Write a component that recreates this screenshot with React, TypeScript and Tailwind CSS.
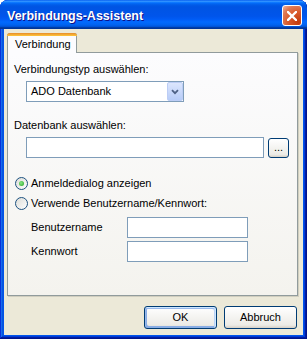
const font = "font-['Liberation_Sans',Arial,sans-serif]";

function Radio({ checked }: { checked?: boolean }) {
  return (
    <span className="flex h-[13px] w-[13px] shrink-0 items-center justify-center rounded-full border border-[#1c5180] bg-[linear-gradient(135deg,#dcdcd7,#ffffff)]">
      {checked && (
        <span className="h-[5px] w-[5px] rounded-full bg-[radial-gradient(circle_at_40%_40%,#8ae886,#21a121)]" />
      )}
    </span>
  );
}

const btn =
  'rounded-[3px] border border-[#003c74] bg-[linear-gradient(180deg,#ffffff,#ecebe6_86%,#d6d0c5)] text-[11px] leading-[13px] text-black';

export default function App() {
  return (
    <div className={`${font} h-[339px] w-[307px] bg-white`}>
      <div className="flex h-[339px] w-[307px] flex-col rounded-t-[8px] bg-[#0055ea] shadow-[inset_-1px_-1px_#00138c,inset_1px_1px_#0831d9,inset_-2px_-2px_#001ea0,inset_2px_2px_#166aee,inset_-3px_-3px_#003bda,inset_3px_3px_#0855dd]">
        {/* title bar */}
        <div className="flex h-[29px] items-start rounded-t-[8px] bg-[linear-gradient(180deg,#0058ee_0%,#3593ff_4%,#288eff_6%,#127dff_8%,#036ffc_10%,#0262ee_14%,#0057e5_20%,#0054e3_24%,#0055eb_56%,#005bf5_66%,#026afe_76%,#0062ef_86%,#0052d6_92%,#0040ab_94%,#003092_100%)] pl-[7px] pr-[5px] pt-[5px]">
          <span className="mt-[4px] text-[12.5px] font-bold leading-[15px] text-white [text-shadow:1px_1px_#0f1089]">
            Verbindungs-Assistent
          </span>
          <button className="ml-auto flex h-[21px] w-[20px] items-center justify-center rounded-[3px] border border-white bg-[radial-gradient(circle_at_85%_85%,#c23a0c_0%,#d9592a_45%,#e07a55_75%,#f1b59e_100%)]">
            <svg width="10" height="10" viewBox="0 0 10 10">
              <path d="M1 1 L9 9 M9 1 L1 9" stroke="#ffffff" strokeWidth="2.3" strokeLinecap="square" />
            </svg>
          </button>
        </div>

        {/* client area */}
        <div className="mx-[4px] mb-[4px] flex h-[306px] flex-col bg-[#ece9d8] pt-[4px] text-[11px] leading-[13px] text-black">
          <div className="relative z-10 -mb-px ml-[3px] h-[20px] w-[70px] rounded-t-[3px] border border-b-0 border-[#919b9c] bg-[#fcfcfe] pl-[7px] pt-[4px]">
            <span className="absolute -left-px -right-px -top-px h-[3px] rounded-t-[3px] bg-[linear-gradient(180deg,#e68b2c,#ffc73c)]" />
            Verbindung
          </div>

          <div className="ml-[3px] flex h-[244px] w-[291px] flex-col border border-[#919b9c] bg-[linear-gradient(180deg,#fcfcfe,#f4f3ee)] shadow-[1px_1px_#d0cebf]">
            <div className="pl-[6px] pt-[10px]">Verbindungstyp auswählen:</div>

            <div className="ml-[18px] mt-[5px] flex h-[21px] w-[158px] border border-[#7f9db9] bg-white">
              <span className="flex flex-1 items-center pl-[4px]">ADO Datenbank</span>
              <span className="flex w-[16px] items-center justify-center rounded-[2px] border border-[#bccdf5] bg-[linear-gradient(180deg,#dce6fd,#b7ccf8)]">
                <svg width="8" height="6" viewBox="0 0 8 6">
                  <path d="M1 1.2 L4 4.2 L7 1.2" fill="none" stroke="#4d6185" strokeWidth="1.8" />
                </svg>
              </span>
            </div>

            <div className="mt-[17px] pl-[6px]">Datenbank auswählen:</div>

            <div className="ml-[18px] mt-[5px] flex items-start gap-[4px]">
              <div className="h-[21px] w-[238px] border border-[#7f9db9] bg-white" />
              <button className={`${btn} mt-px flex h-[20px] w-[21px] items-end justify-center pb-[3px]`}>...</button>
            </div>

            <div className="ml-[7px] mt-[19px] flex h-[13px] items-center gap-[3px]">
              <Radio checked />
              <span>Anmeldedialog anzeigen</span>
            </div>
            <div className="ml-[7px] mt-[7px] flex h-[13px] items-center gap-[3px]">
              <Radio />
              <span>Verwende Benutzername/Kennwort:</span>
            </div>

            <div className="ml-[23px] mt-[7px] flex items-center">
              <span className="w-[96px]">Benutzername</span>
              <div className="h-[21px] w-[121px] border border-[#7f9db9] bg-white" />
            </div>
            <div className="ml-[23px] mt-[3px] flex items-center">
              <span className="w-[96px]">Kennwort</span>
              <div className="h-[21px] w-[121px] border border-[#7f9db9] bg-white" />
            </div>
          </div>

          <div className="mt-[10px] flex justify-end gap-[7px] pr-[6px]">
            <button
              className={`${btn} h-[23px] w-[73px] shadow-[inset_-1px_1px_#cee7ff,inset_1px_2px_#98b8ea,inset_-2px_2px_#bcd4f6,inset_1px_-1px_#89ade4,inset_2px_-2px_#89ade4]`}
            >
              OK
            </button>
            <button className={`${btn} h-[23px] w-[73px]`}>Abbruch</button>
          </div>
        </div>
      </div>
    </div>
  );
}
